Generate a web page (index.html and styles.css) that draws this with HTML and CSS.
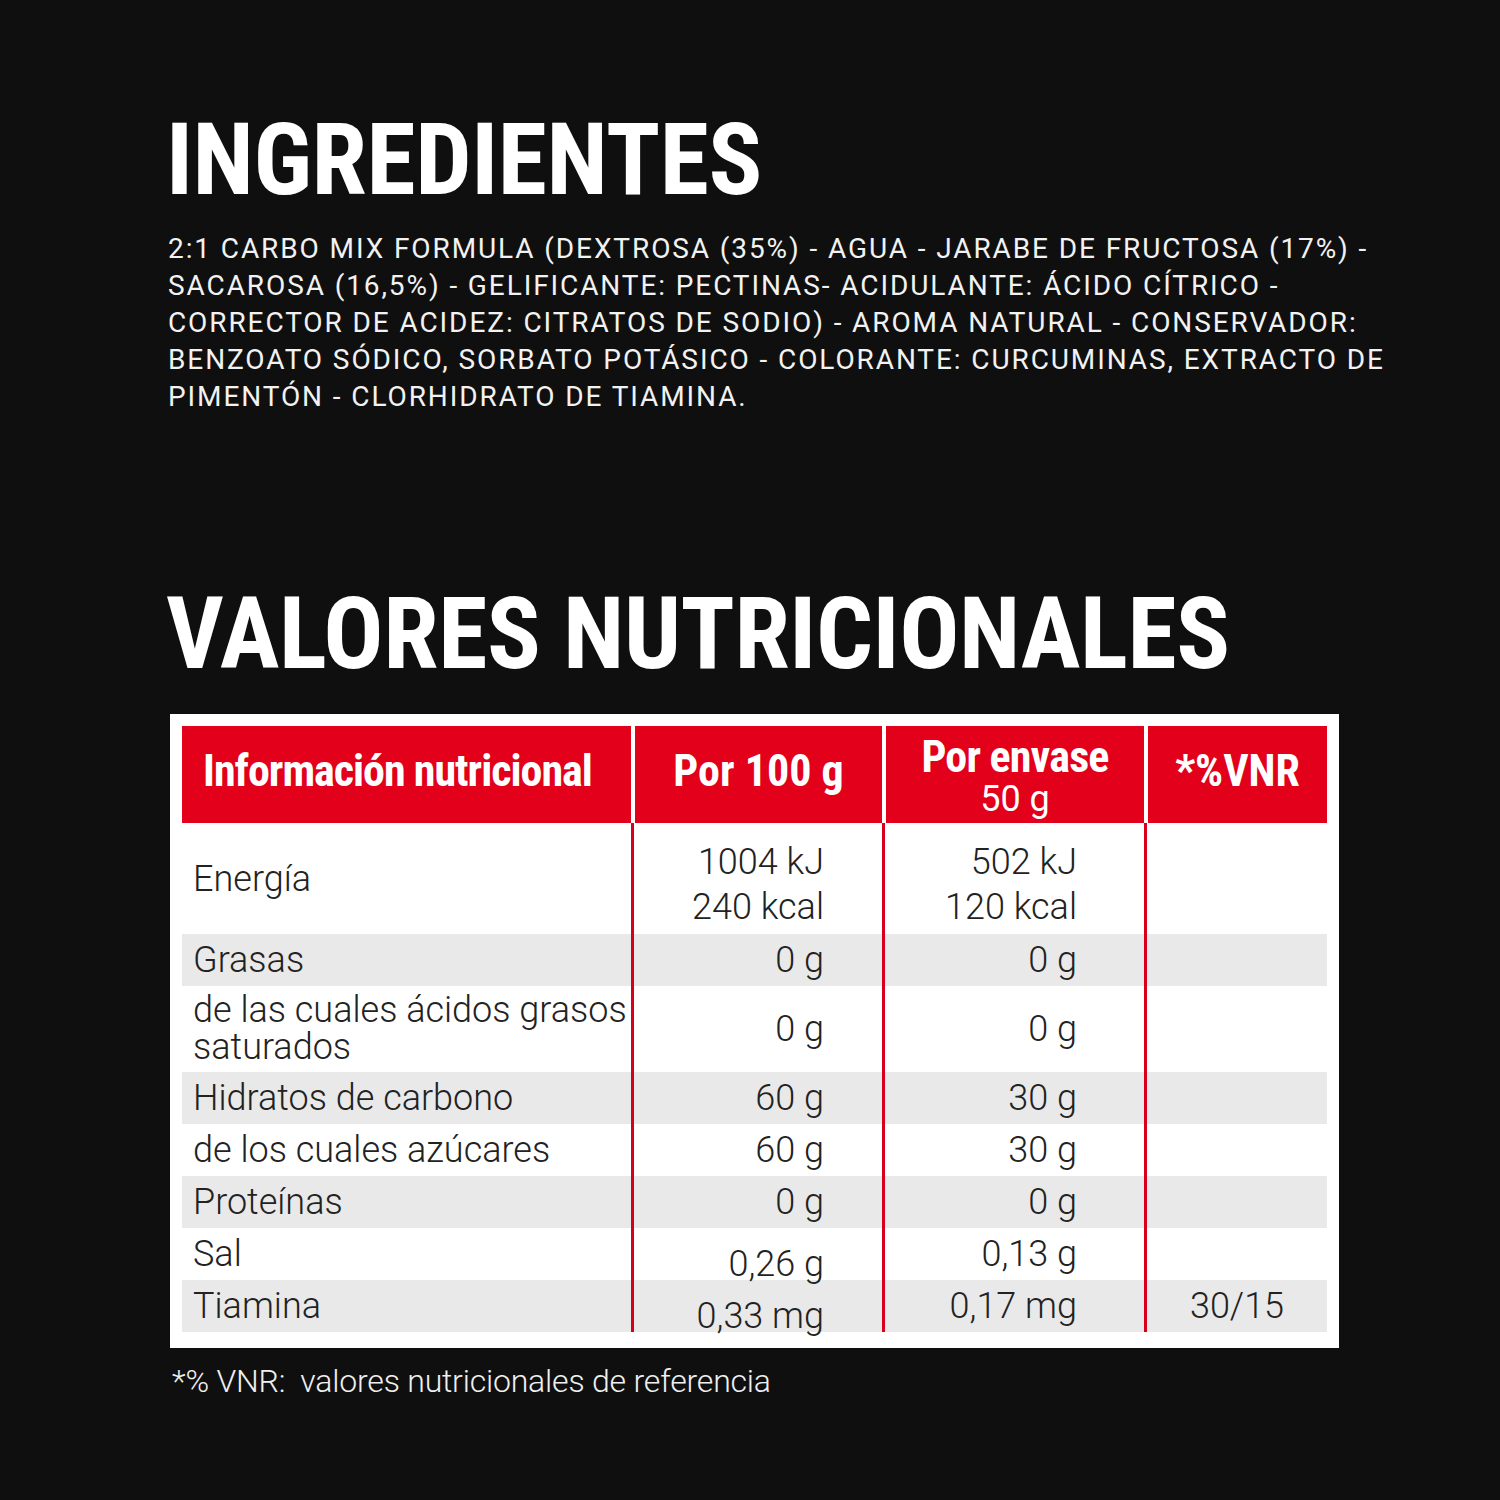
FILE: index.html
```html
<!DOCTYPE html>
<html lang="es">
<head>
<meta charset="utf-8">
<title>Ingredientes y valores nutricionales</title>
<link rel="stylesheet" href="styles.css">
</head>
<body>
<main class="page">
  <section class="ingredients">
    <h2 class="title">INGREDIENTES</h2>
    <p class="ing-text">2:1 CARBO MIX FORMULA (DEXTROSA (35%) - AGUA - JARABE DE FRUCTOSA (17%) -<br>SACAROSA (16,5%) - GELIFICANTE: PECTINAS- ACIDULANTE: ÁCIDO CÍTRICO -<br>CORRECTOR DE ACIDEZ: CITRATOS DE SODIO) - AROMA NATURAL - CONSERVADOR:<br>BENZOATO SÓDICO, SORBATO POTÁSICO - COLORANTE: CURCUMINAS, EXTRACTO DE<br>PIMENTÓN - CLORHIDRATO DE TIAMINA.</p>
  </section>
  <section class="nutrition">
    <h2 class="title title-2">VALORES NUTRICIONALES</h2>
    <div class="panel">
      <table class="nt">
        <colgroup>
          <col class="w1"><col class="w2"><col class="w3"><col class="w4">
        </colgroup>
        <thead>
          <tr>
            <th class="h-first">Información nutricional</th>
            <th>Por 100 g</th>
            <th class="h-two"><span class="h-main">Por envase</span><span class="h-sub">50 g</span></th>
            <th>*%VNR</th>
          </tr>
        </thead>
        <tbody>
          <tr class="r-energy">
            <td class="lbl">Energía</td>
            <td class="v2"><span class="two">1004 kJ<br>240 kcal</span></td>
            <td class="v3"><span class="two">502 kJ<br>120 kcal</span></td>
            <td class="v4"></td>
          </tr>
          <tr class="alt">
            <td class="lbl">Grasas</td>
            <td class="v2">0 g</td>
            <td class="v3">0 g</td>
            <td class="v4"></td>
          </tr>
          <tr class="r-sat">
            <td class="lbl lbl-two">de las cuales ácidos grasos<br>saturados</td>
            <td class="v2">0 g</td>
            <td class="v3">0 g</td>
            <td class="v4"></td>
          </tr>
          <tr class="alt">
            <td class="lbl">Hidratos de carbono</td>
            <td class="v2">60 g</td>
            <td class="v3">30 g</td>
            <td class="v4"></td>
          </tr>
          <tr>
            <td class="lbl">de los cuales azúcares</td>
            <td class="v2">60 g</td>
            <td class="v3">30 g</td>
            <td class="v4"></td>
          </tr>
          <tr class="alt">
            <td class="lbl">Proteínas</td>
            <td class="v2">0 g</td>
            <td class="v3">0 g</td>
            <td class="v4"></td>
          </tr>
          <tr>
            <td class="lbl">Sal</td>
            <td class="v2 low">0,26 g</td>
            <td class="v3">0,13 g</td>
            <td class="v4"></td>
          </tr>
          <tr class="alt">
            <td class="lbl">Tiamina</td>
            <td class="v2 low">0,33 mg</td>
            <td class="v3">0,17 mg</td>
            <td class="v4">30/15</td>
          </tr>
        </tbody>
      </table>
    </div>
    <p class="note">*% VNR:&nbsp; valores nutricionales de referencia</p>
  </section>
</main>
</body>
</html>
```

FILE: styles.css
```css
html, body {
  margin: 0;
  padding: 0;
  background: #0f0f0f;
}

.page {
  width: 1500px;
  height: 1500px;
  box-sizing: border-box;
  padding: 110px 0 0 168px;
  background: #0f0f0f;
  font-family: Roboto, "Liberation Sans", sans-serif;
  color: #f2f2f2;
}

.title {
  margin: 0 0 0 -2px;
  font-family: Roboto, "Liberation Sans", sans-serif;
  font-weight: 700;
  font-stretch: 73%;
  font-size: 100px;
  line-height: 100px;
  color: #ffffff;
  letter-spacing: -0.4px;
}

.ing-text {
  margin: 20px 0 0 0;
  font-size: 28px;
  line-height: 37px;
  font-weight: 400;
  letter-spacing: 1.9px;
  color: #f2f2f2;
}

.title-2 {
  margin-top: 169px;
}

.panel {
  margin-top: 30px;
  width: 1169px;
  box-sizing: border-box;
  padding: 12px 12px 16px 12px;
  margin-left: 2px;
  background: #ffffff;
}

.nt {
  width: 1145px;
  table-layout: fixed;
  border-collapse: separate;
  border-spacing: 0;
}

.w1 { width: 449px; }
.w2 { width: 251px; }
.w3 { width: 262px; }
.w4 { width: 183px; }

.nt th {
  height: 97px;
  padding: 0 0 8px 0;
  box-sizing: border-box;
  background: #e2001a;
  color: #ffffff;
  font-weight: 700;
  font-stretch: 75%;
  font-size: 44px;
  line-height: 44px;
  text-align: center;
  vertical-align: middle;
  border-left: 4px solid #ffffff;
}

.nt th.h-first {
  text-align: left;
  padding-left: 21px;
  border-left: 0;
  letter-spacing: -1px;
}

.nt th.h-two {
  vertical-align: top;
  padding: 11px 0 0 0;
}

.h-two .h-main,
.h-two .h-sub {
  display: block;
}

.h-two .h-main {
  line-height: 40px;
  letter-spacing: -0.8px;
}

.h-two .h-sub {
  margin-top: 3px;
  font-weight: 400;
  font-stretch: 90%;
  font-size: 36px;
  line-height: 38px;
}

.nt td {
  height: 52px;
  padding: 0;
  font-size: 36px;
  font-weight: 300;
  line-height: 40px;
  color: #222222;
  vertical-align: middle;
  background: #ffffff;
  border-left: 3px solid #d6001c;
}

.nt td.lbl {
  border-left: 0;
  padding-left: 11px;
  text-align: left;
}

.nt tr.alt td {
  background: #e9e9e9;
}

.nt td.v2 {
  text-align: right;
  padding-right: 58px;
}

.nt td.v3 {
  text-align: right;
  padding-right: 67px;
}

.nt td.v4 {
  text-align: center;
}

.r-energy td {
  height: 111px;
}

.two {
  display: block;
  line-height: 45px;
  margin-top: 13px;
}

.r-sat td {
  height: 86px;
}

.nt td.lbl-two {
  line-height: 37px;
}

.nt td.low {
  vertical-align: bottom;
  line-height: 32px;
}

.note {
  margin: 13px 0 0 4px;
  font-size: 32px;
  line-height: 40px;
  font-weight: 300;
  letter-spacing: -0.2px;
  color: #f0f0f0;
}
```
